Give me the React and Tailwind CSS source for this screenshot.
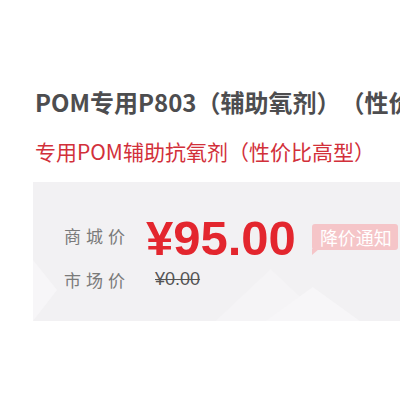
import React from 'react';

const cjk = { fontFamily: '"Noto Sans CJK SC", "Noto Sans", sans-serif' };

/* ── faint diamond shapes behind the price block ── */
function PanelDecor() {
  return (
    <svg className="absolute inset-0 h-full w-full" viewBox="0 0 366 139" preserveAspectRatio="none">
      <polygon points="0,78 24,108 0,139" fill="#f7f6f8" />
      <polygon points="182,139 237,87 292,139" fill="#f5f4f6" />
      <polygon points="232,139 279,105 326,139" fill="#f7f6f8" />
    </svg>
  );
}

export default function App() {
  return (
    <div className="w-[400px] h-[400px] overflow-hidden bg-white [text-spacing-trim:space-all]" style={cjk}>
      <div className="pl-[35px] pt-[86px]">
        <h1 className="overflow-hidden whitespace-nowrap text-[24px] font-bold leading-[32px] text-[#4d4d4f]">
          POM专用P803（辅助氧剂）（性价比高型）
        </h1>
        <p className="mt-[20px] whitespace-nowrap text-[21px] leading-[26px] text-[#d2303a]">
          专用POM辅助抗氧剂（性价比高型）
        </p>
      </div>

      <div className="relative ml-[33px] mt-[18px] h-[139px] bg-[#f2f1f3]">
        <PanelDecor />
        <div className="relative flex flex-col pl-[31px] pt-[31px]">
          <div className="flex items-center">
            <span className="mb-[5px] w-[82px] text-[17px] tracking-[5px] text-[#7a7a7a]">商城价</span>
            <span
              className="text-[49px] font-bold leading-[50px] text-[#e3262e]"
              style={{ fontFamily: '"Liberation Sans", Arial, sans-serif' }}
            >
              ¥95.00
            </span>
            <div className="relative mb-[2px] ml-[16px] flex h-[26px] items-center rounded-[3px] bg-[#f5c5c8] pl-[8px] pr-[6px]">
              <span className="text-[18px] leading-none text-white">降价通知</span>
              <span className="absolute -bottom-[5px] left-0 h-0 w-0 border-r-[7px] border-t-[6px] border-r-transparent border-t-[#f5c5c8]" />
            </div>
          </div>
          <div className="mt-[3px] flex items-center">
            <span className="w-[91px] text-[17px] tracking-[5px] text-[#7a7a7a]">市场价</span>
            <span
              className="text-[18px] text-[#555] line-through"
              style={{ fontFamily: '"Liberation Sans", Arial, sans-serif' }}
            >
              ¥0.00
            </span>
          </div>
        </div>
      </div>
    </div>
  );
}
